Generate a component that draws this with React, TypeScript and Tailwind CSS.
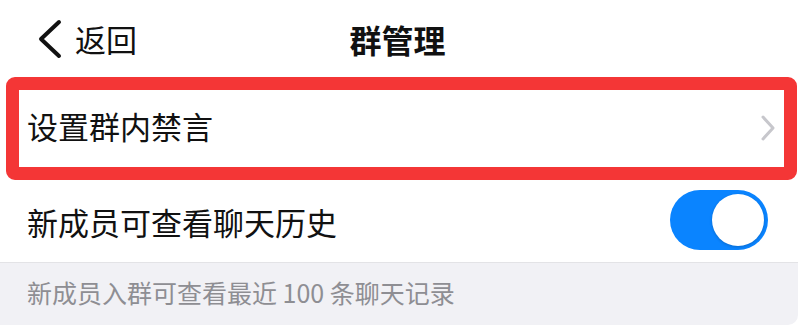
export default function App() {
  return (
    <div
      className="w-[803px] h-[328px] bg-white overflow-hidden text-[#111]"
      style={{ fontFamily: '"Noto Sans CJK SC", "Noto Sans", sans-serif' }}
    >
      {/* 导航栏 */}
      <div className="h-[77px] grid grid-cols-[1fr_auto_1fr] items-center">
        <div className="flex items-center pl-[37px] gap-[13px]">
          <svg width="25" height="40" viewBox="0 0 25 40" fill="none">
            <path d="M22 3 L4 20 L22 37" stroke="#111" strokeWidth="4" strokeLinecap="round" strokeLinejoin="round" />
          </svg>
          <span className="text-[31px] leading-none">返回</span>
        </div>
        <div className="text-[32px] font-bold leading-none -ml-[8px]">群管理</div>
        <div />
      </div>

      {/* 设置群内禁言 */}
      <div className="mx-[6px] h-[103px] border-[13px] border-[#f43636] rounded-[9px] flex items-center justify-between pl-[8px] pr-[8px]">
        <span className="text-[31px] leading-none -mt-[6px]">设置群内禁言</span>
        <svg width="16" height="26" viewBox="0 0 16 26" fill="none" className="-mt-[2px]">
          <path d="M3 2 L13 13 L3 24" stroke="#c7c7cc" strokeWidth="3" strokeLinecap="round" strokeLinejoin="round" />
        </svg>
      </div>

      {/* 新成员可查看聊天历史 */}
      <div className="h-[83px] flex items-center justify-between pl-[27px] pr-[30px] border-b border-[#e3e3e6] mr-[5px]">
        <span className="text-[31px] leading-none">新成员可查看聊天历史</span>
        <div className="w-[98px] h-[60px] rounded-full bg-[#0a84ff] flex items-center justify-end pr-[4px] -mt-[2px]">
          <div className="w-[52px] h-[52px] rounded-full bg-white shadow-[0_1px_3px_rgba(0,0,0,0.2)]" />
        </div>
      </div>

      {/* 说明 */}
      <div className="h-[62px] bg-[#f1f1f5] mr-[5px] rounded-br-[10px] flex items-center pl-[27px]">
        <span className="text-[25px] leading-none text-[#8e8e93] -mt-[3px]">新成员入群可查看最近 100 条聊天记录</span>
      </div>
    </div>
  );
}
